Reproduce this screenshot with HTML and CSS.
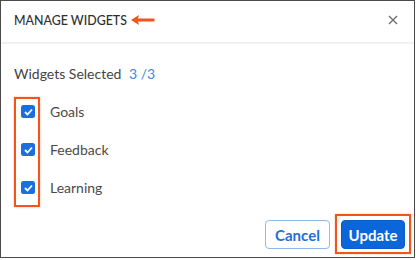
FILE: index.html
```html
<!DOCTYPE html>
<html>
<head>
<meta charset="utf-8">
<link rel="stylesheet" href="styles.css">
</head>
<body>
<div class="dialog">
  <div class="header">
    <div class="title">MANAGE WIDGETS</div>
    <svg class="arrow" width="24" height="10" viewBox="0 0 24 10">
      <path d="M0 5 L8 0 L7 3.5 L23.5 3.5 L23.5 6.5 L7 6.5 L8 10 Z" fill="#f2541b"/>
    </svg>
    <svg class="close" width="10" height="10" viewBox="0 0 10 10">
      <path d="M1 1 L9 9 M9 1 L1 9" stroke="#6f6f6f" stroke-width="1.4" fill="none"/>
    </svg>
  </div>
  <div class="body">
    <div class="selected">Widgets Selected <span class="count">3 /3</span></div>
    <div class="list">
      <div class="row"><span class="box"><svg width="9" height="8" viewBox="0 0 9 8"><path d="M1 4 L3.5 6.5 L8 1.5" stroke="#fff" stroke-width="1.8" fill="none"/></svg></span><span class="label">Goals</span></div>
      <div class="row"><span class="box"><svg width="9" height="8" viewBox="0 0 9 8"><path d="M1 4 L3.5 6.5 L8 1.5" stroke="#fff" stroke-width="1.8" fill="none"/></svg></span><span class="label">Feedback</span></div>
      <div class="row"><span class="box"><svg width="9" height="8" viewBox="0 0 9 8"><path d="M1 4 L3.5 6.5 L8 1.5" stroke="#fff" stroke-width="1.8" fill="none"/></svg></span><span class="label">Learning</span></div>
      <div class="mark mark-list"></div>
    </div>
  </div>
  <div class="footer">
    <button class="btn cancel">Cancel</button>
    <div class="update-wrap">
      <button class="btn update">Update</button>
      <div class="mark mark-update"></div>
    </div>
  </div>
</div>
</body>
</html>
```
FILE: styles.css
```css
* { box-sizing: border-box; }
html, body { margin: 0; padding: 0; background: #fff; }
body { font-family: Lato, "Noto Sans", sans-serif; }
.dialog {
  width: 415px;
  height: 258px;
  border: 1px solid #4a4a4a;
  background: #fff;
  display: flex;
  flex-direction: column;
}
.header {
  height: 43px;
  border-bottom: 2px solid #f0f0f0;
  display: flex;
  align-items: center;
  padding: 0 0 2px 13px;
  position: relative;
}
.title {
  font-size: 12.4px;
  font-weight: 500;
  color: #2f2f2f;
}
.arrow { margin-left: 4px; margin-top: -1px; }
.close { margin-left: auto; margin-right: 16px; margin-top: -1px; }
.body {
  padding: 20px 0 0 13px;
}
.selected {
  font-size: 14px;
  color: #444;
  height: 20px;
  line-height: 20px;
}
.count { color: #3b87e6; margin-left: 4px; }
.list {
  position: relative;
  margin-top: 21px;
  padding-left: 7px;
  display: flex;
  flex-direction: column;
  gap: 25px;
}
.row {
  display: flex;
  align-items: center;
  height: 13px;
}
.box {
  width: 14px;
  height: 13px;
  border-radius: 2.5px;
  background: #1b6ee0;
  display: flex;
  align-items: center;
  justify-content: center;
}
.label {
  margin-left: 15px;
  font-size: 14px;
  color: #4a4a4a;
}
.mark {
  position: absolute;
  border: 2px solid #f2541b;
  box-shadow: 0 0 2px rgba(242, 84, 27, 0.4);
}
.mark-list {
  left: 0;
  top: -8px;
  width: 26px;
  height: 110px;
}
.footer {
  margin-top: auto;
  display: flex;
  justify-content: flex-end;
  align-items: center;
  gap: 11px;
  padding: 0 9px 8px 0;
}
.btn {
  font-family: Lato, "Noto Sans", sans-serif;
  font-weight: 700;
  font-size: 15px;
  height: 29px;
  border-radius: 4px;
  cursor: pointer;
}
.cancel {
  width: 65px;
  background: #fff;
  border: 1px solid #8fb9ef;
  color: #1f6fd8;
}
.update-wrap { position: relative; }
.update {
  width: 64px;
  background: #0a66d9;
  border: 1px solid #0a5fcc;
  color: #fff;
  display: block;
}
.mark-update {
  left: -6px;
  top: -6px;
  right: -6px;
  bottom: -5px;
}
```
